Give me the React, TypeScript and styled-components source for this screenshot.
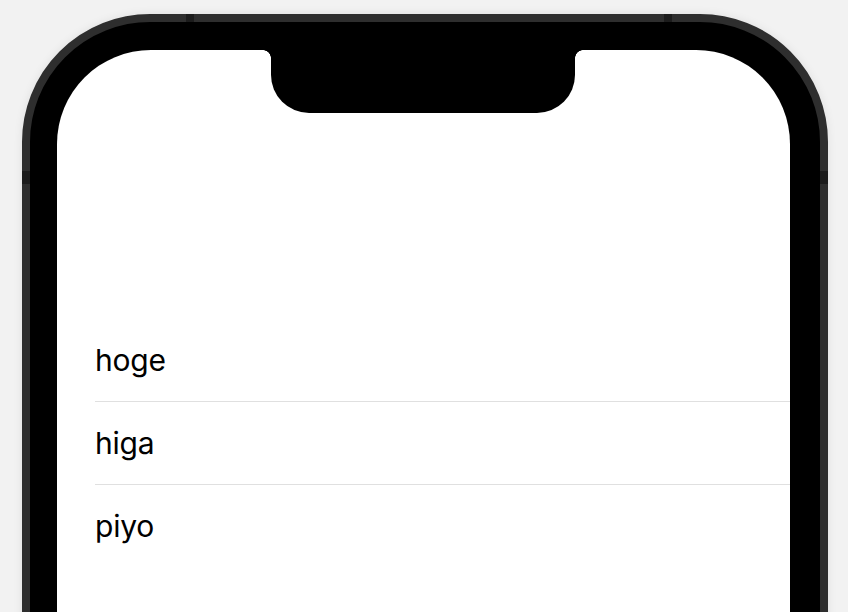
import styled, { createGlobalStyle } from "styled-components";

const items = ["hoge", "higa", "piyo"];

const GlobalStyle = createGlobalStyle`
    html, body {
        margin: 0;
        padding: 0;
        background: #f2f2f2;
    }
    body {
        font-family: Inter, "Noto Sans", sans-serif;
    }
`;

export default function App() {
    return (
        <>
            <GlobalStyle />
            <Page>
                <Phone>
                    <Band $side="top" $at={156} />
                    <Band $side="top" $at={634} />
                    <Band $side="left" $at={149} />
                    <Band $side="right" $at={149} />
                    <Bezel>
                        <Screen>
                            <Notch />
                            <List>
                                {items.map((item, i) => (
                                    <Row key={item} $last={i === items.length - 1}>
                                        <Label>{item}</Label>
                                    </Row>
                                ))}
                            </List>
                        </Screen>
                    </Bezel>
                </Phone>
            </Page>
        </>
    );
}

const Page = styled.div`
    width: 848px;
    height: 612px;
    overflow: hidden;
    padding: 14px 20px 0 22px;
    box-sizing: border-box;
`;

const Phone = styled.div`
    position: relative;
    width: 806px;
    height: 820px;
    box-sizing: border-box;
    border: 8px solid #2e2e2e;
    border-radius: 128px;
    background: #000;
    box-shadow: 0 0 10px rgba(0, 0, 0, 0.08);
`;

const Band = styled.span<{ $side: "top" | "left" | "right"; $at: number }>`
    position: absolute;
    background: #1c1c1c;
    ${(p) =>
        p.$side === "top"
            ? `top: -8px; left: ${p.$at}px; width: 8px; height: 8px;`
            : `${p.$side}: -8px; top: ${p.$at}px; width: 8px; height: 13px;`}
`;

const Bezel = styled.div`
    height: 100%;
    box-sizing: border-box;
    padding: 28px 30px 0 27px;
`;

const Screen = styled.div`
    position: relative;
    height: 100%;
    background: #fff;
    border-radius: 94px 94px 0 0;
    padding-top: 269px;
    box-sizing: border-box;
`;

const Notch = styled.div`
    position: absolute;
    top: 0;
    left: 214px;
    width: 304px;
    height: 63px;
    background: #000;
    border-radius: 0 0 38px 38px;

    &::before,
    &::after {
        content: "";
        position: absolute;
        top: 0;
        width: 8px;
        height: 8px;
    }
    &::before {
        left: -8px;
        background: radial-gradient(circle at 0 100%, transparent 7.5px, #000 8px);
    }
    &::after {
        right: -8px;
        background: radial-gradient(circle at 100% 100%, transparent 7.5px, #000 8px);
    }
`;

const List = styled.div`
    display: flex;
    flex-direction: column;
`;

const Row = styled.div<{ $last: boolean }>`
    height: 83px;
    margin-left: 38px;
    display: flex;
    align-items: center;
    box-sizing: border-box;
    border-bottom: 1px solid ${(p) => (p.$last ? "transparent" : "#e0e0e0")};
`;

const Label = styled.span`
    font-size: 30px;
    color: #000;
    letter-spacing: -0.2px;
`;
